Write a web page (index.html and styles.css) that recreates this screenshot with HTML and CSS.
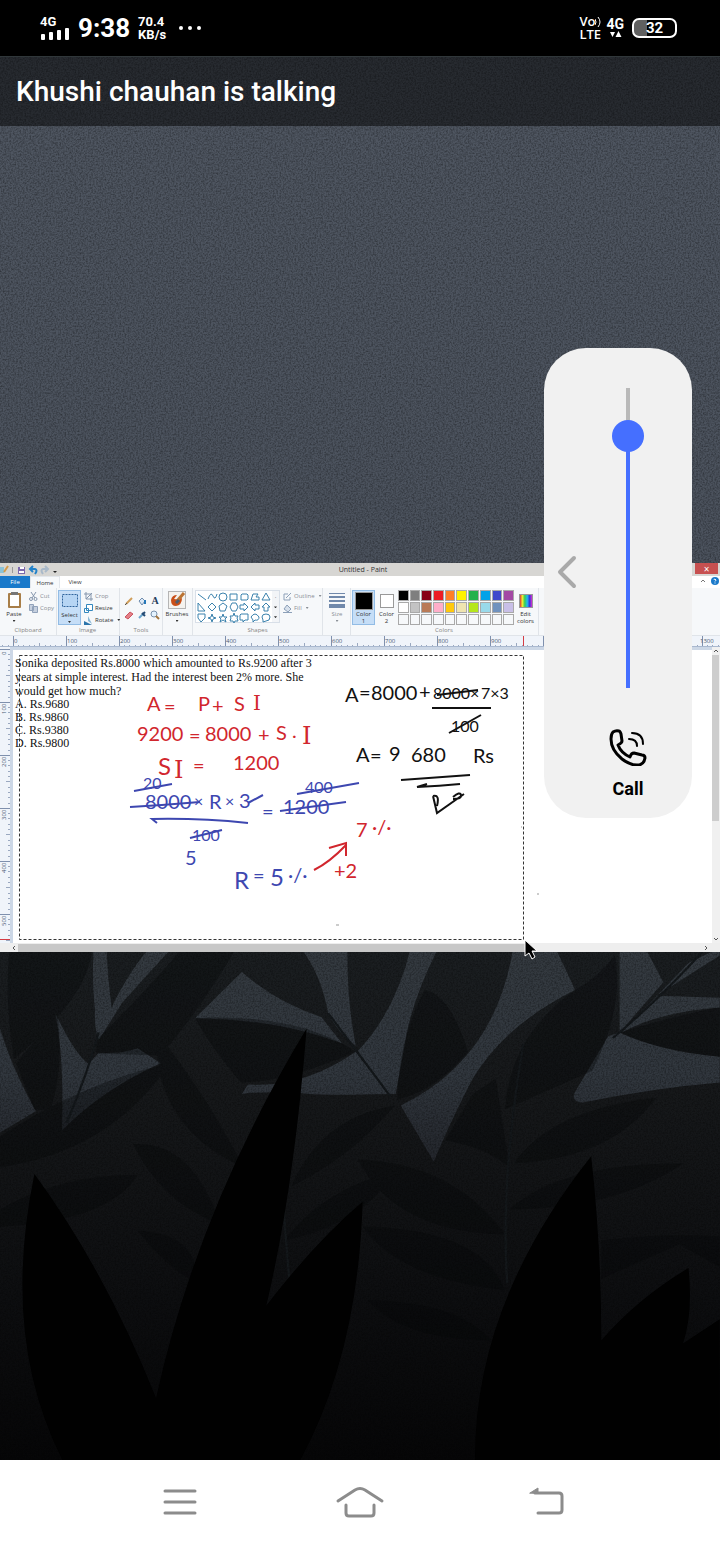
FILE: index.html
```html
<!DOCTYPE html>
<html lang="en">
<head>
<meta charset="utf-8">
<meta name="viewport" content="width=device-width, initial-scale=1">
<title>Meeting</title>
<link rel="stylesheet" href="styles.css">
</head>
<body>
<header class="status">
  <div class="status-left">
    <div class="signal"><span>4G</span>
      <svg width="30" height="14" viewBox="0 0 30 14"><g fill="#fff"><rect x="1" y="7" width="4" height="6" rx="1"/><rect x="9" y="5" width="4" height="8" rx="1"/><rect x="17" y="3" width="4" height="10" rx="1"/><rect x="25" y="1" width="4" height="12" rx="1"/></g></svg>
    </div>
    <time class="clock">9:38</time>
    <div class="speed"><span>70.4</span><span>KB/s</span></div>
    <svg width="24" height="6" viewBox="0 0 24 6" fill="#fff"><circle cx="3" cy="3" r="2"/><circle cx="12" cy="3" r="2"/><circle cx="21" cy="3" r="2"/></svg>
  </div>
  <div class="status-right">
    <div class="volte"><span>Vo<svg width="6" height="10" viewBox="0 0 6 10" fill="none" stroke="#fff"><path d="M0 2q2 3 0 6M3 0q4 5 0 10"/></svg></span><span>LTE</span></div>
    <div class="data"><span>4G</span><svg width="13" height="7" viewBox="0 0 13 7" fill="#fff"><path d="M1 1h5L3.500 6zM6.500 6h6L9.500 0z"/></svg></div>
    <div class="battery"><span>32</span></div>
  </div>
</header>

<main class="stage">
  <svg class="backdrop" viewBox="0 0 720 1404" preserveAspectRatio="xMidYMid slice" aria-hidden="true">
    <defs>
      <linearGradient id="sky" x1="0" y1="0" x2="0" y2="1"><stop offset="0" stop-color="#4f5661"/><stop offset=".36" stop-color="#4b525d"/><stop offset=".62" stop-color="#3b4149"/><stop offset="1" stop-color="#202329"/></linearGradient>
      <linearGradient id="floor" x1="0" y1="0" x2="0" y2="1"><stop offset="0" stop-color="#1c2023"/><stop offset=".3" stop-color="#17191b"/><stop offset=".7" stop-color="#0d0e10"/><stop offset="1" stop-color="#060607"/></linearGradient>
      <linearGradient id="gap" gradientUnits="userSpaceOnUse" x1="0" y1="30" x2="0" y2="560"><stop offset="0" stop-color="#343a40"/><stop offset=".6" stop-color="#31373e"/><stop offset="1" stop-color="#24272d"/></linearGradient>
      <filter id="grain" x="0" y="0" width="100%" height="100%"><feTurbulence type="fractalNoise" baseFrequency=".6" numOctaves="2" seed="4"/><feColorMatrix values="0 0 0 0 0  0 0 0 0 0  0 0 0 0 0  .700 0 0 0 -.25"/></filter>
    </defs>
    <rect width="720" height="1404" fill="url(#sky)"/>
    <rect y="860" width="720" height="544" fill="url(#floor)"/>
    <g transform="translate(0 884) scale(.459 .385)">
      <g fill="url(#gap)">
        <path d="M204 20H232Q235 110 245 190L215 260Q205 230 207 180Q200 110 204 20Z"/>
        <path d="M325 20H375Q320 90 265 165L215 260Q250 130 325 20Z"/>
        <path d="M527 83L425 203Q600 205 745 268L700 200Q600 160 527 83Z"/>
        <path d="M655 20H757Q755 150 775 275Q735 240 715 190Q700 90 655 20Z"/>
        <path d="M895 20H955Q900 150 885 250L862 400H845L778 290Q860 190 895 20Z"/>
        <path d="M527 400L540 375Q660 385 775 290L845 400Q690 405 650 397Q560 393 527 400Z"/>
        <path d="M1118 20H1210L1253 130Q1100 220 1030 360Q990 450 945 575L873 430Q1080 310 1118 20Z"/>
        <path d="M120 190Q165 300 193 322L215 293Q260 297 300 281L350 320Q220 390 135 495Q140 300 120 190Z"/>
        <path d="M1350 30H1410L1445 110L1350 240Z"/>
        <path d="M1500 60L1568 20V40L1430 145L1568 150V175Q1440 185 1355 240Z"/>
        <path d="M1325 250L1350 240Q1440 290 1568 303V370Q1420 385 1270 422Q1240 420 1255 390Z"/>
        <path d="M0 230Q25 330 78 445L0 500Z"/>
      </g>
      <g fill="#050708" opacity=".34">
        <path d="M20 30H200Q190 150 30 310Q10 160 20 30ZM35 320Q90 240 125 190Q140 340 110 440L75 440ZM210 260Q320 130 390 31H510Q430 190 350 300L210 295Z"/>
        <path d="M425 203Q650 190 775 290Q620 370 525 370Q460 280 425 203ZM925 130Q980 140 1020 290Q950 390 865 415Q870 250 925 130Z"/>
        <path d="M1350 240Q1490 190 1568 175V303Q1430 285 1350 240ZM1253 130Q1300 100 1340 40Q1360 180 1290 340L1100 440Q1110 250 1253 130Z"/>
        <path d="M0 510Q180 370 370 320Q240 550 0 590ZM0 700Q130 610 300 610Q240 730 0 745ZM335 230Q450 400 530 590Q390 520 350 360ZM290 530Q420 520 480 740Q350 680 290 530Z"/>
        <path d="M635 640Q700 460 860 430Q770 560 635 640ZM780 570Q990 580 1100 765Q860 760 780 570ZM620 780Q700 650 860 600Q790 740 620 780ZM790 745Q1050 750 1100 910Q870 880 790 745Z"/>
        <path d="M1120 580Q1200 440 1430 410Q1330 570 1120 580ZM1110 700Q1220 580 1490 580Q1340 700 1110 700ZM1310 780Q1450 760 1568 770V850L1480 790L1310 880ZM300 755Q430 760 430 890Q370 860 300 755ZM800 935Q1000 940 1070 1040Q880 1040 800 935ZM970 520Q1060 540 1110 590L1080 360L1030 400Z"/>
      </g>
      <path d="M215 240Q190 350 145 475M715 190Q790 310 850 405M1530 31Q1440 150 1335 255M1140 270Q1090 620 1105 890M615 660L630 880" fill="none" stroke="#14181b" stroke-width="5"/>
      <path fill="#010101" d="M75 608Q230 860 340 1190Q430 700 668 230Q640 650 580 950Q690 780 790 680Q780 1080 650 1360H140Q0 1040 75 608ZM1288 562Q1310 800 1310 1040Q1390 930 1500 852Q1510 970 1488 1048L1568 985V1360H1035Q1030 950 1288 562Z"/>
    </g>
    <rect width="720" height="1404" filter="url(#grain)"/>
  </svg>

  <h1 class="talking">Khushi chauhan is talking</h1>

  <section class="paint" aria-label="Shared screen">
    <div class="win-title">
      <div class="quick">
        <svg width="60" height="12" viewBox="0 0 60 12"><path d="M0 3h4v6H0z" fill="#8cc3d8"/><path d="M4 8l4-6" stroke="#d39b4b" stroke-width="2"/><path d="M12.500 3v6" stroke="#999"/><path d="M18 3h7v7h-7z" fill="#7b68ad"/><path d="M20 3h4v2h-4zM19 7h5v2h-5z" fill="#fff"/><path d="M31 5h4q3 1 0 5M33 2l-3 3 3 3" fill="none" stroke="#2382c9" stroke-width="2"/><path d="M47 5h-4q-3 1 0 5M45 2l3 3-3 3" fill="none" stroke="#a9b9c9" stroke-width="2"/><path d="M53 7h4l-2 2z" fill="#222"/></svg>
      </div>
      <span class="win-name">Untitled - Paint</span>
      <div class="win-end"><button class="close" aria-label="Close">×</button></div>
    </div>
    <nav class="tabs">
      <button class="tab file">File</button><button class="tab home">Home</button><button class="tab">View</button>
      <svg class="help" width="22" height="10" viewBox="0 0 22 10"><path d="M3 6l2-2 2 2" fill="none" stroke="#777"/><circle cx="17" cy="5" r="4" fill="#1979ca"/><path d="M16 4q0-1 1-1 2 1 0 2.500M17 6.500v1" fill="none" stroke="#fff"/></svg>
    </nav>
    <div class="ribbon">
      <div class="group clipboard">
        <div class="tools-row">
          <button class="big"><svg width="15" height="18" viewBox="0 0 15 18"><rect x="1" y="2" width="13" height="15" rx="1" fill="#a87e48"/><path d="M3 4h9v11H3z" fill="#fff"/><path d="M4 1h7v3H4z" fill="#777"/></svg>Paste<i class="caret"></i></button>
          <div class="stack dim">
            <button><svg width="9" height="9" viewBox="0 0 9 9" fill="none" stroke="#8596ad"><path d="M2 0l4 6M7 0L3 6"/><circle cx="2" cy="7" r="1.500"/><circle cx="6.500" cy="7" r="1.500"/></svg>Cut</button>
            <button><svg width="9" height="9" viewBox="0 0 9 9" fill="#c6d0df" stroke="#91a2ba"><path d="M.5.5h4v6h-4zM3.500 2.500h5v6h-5z"/></svg>Copy</button>
          </div>
        </div>
        <h2>Clipboard</h2>
      </div>
      <div class="group image">
        <div class="tools-row">
          <button class="big selected"><svg width="18" height="19" viewBox="0 0 18 19"><rect x="1.500" y="3.500" width="15" height="12" fill="#b6d5f4" stroke="#31659d" stroke-dasharray="2 1"/></svg>Select<i class="caret"></i></button>
          <div class="stack">
            <button class="dim"><svg width="9" height="9" viewBox="0 0 9 9" fill="none" stroke="#8596ad"><path d="M2 0v7h7M0 2h7v7M2 7l6-6"/></svg>Crop</button>
            <button><svg width="9" height="9" viewBox="0 0 9 9" fill="#fff" stroke="#3387bd"><path d="M2.500.5h6v6h-6zM.5 4.500h4v4h-4z"/></svg>Resize</button>
            <button><svg width="9" height="9" viewBox="0 0 9 9"><path d="M0 5v4h8z" fill="#2c75ab"/><path d="M4 0v5l4 3z" fill="#89b8d8"/></svg>Rotate<i class="caret"></i></button>
          </div>
        </div>
        <h2>Image</h2>
      </div>
      <div class="group tools">
        <div class="tool-grid">
          <svg viewBox="0 0 10 10"><path d="M2 8l6-6" stroke="#cf9d59" stroke-width="2"/><path d="M1 9l2-2" stroke="#555"/></svg>
          <svg viewBox="0 0 10 10"><path d="M2 5l3-3 3 3-3 4z" fill="#dce8f4" stroke="#6f8daf"/><path d="M8 4v4" stroke="#2678b9" stroke-width="2"/></svg>
          <span>A</span>
          <svg viewBox="0 0 10 10"><path d="M1 7l5-5 3 2-5 5z" fill="#e57f87" stroke="#c85560"/></svg>
          <svg viewBox="0 0 10 10"><path d="M2 8l4-4" stroke="#6aa5cc" stroke-width="2"/><path d="M5 3l3 3M6 4l2-2" stroke="#234a73" stroke-width="2"/></svg>
          <svg viewBox="0 0 10 10"><circle cx="4" cy="4" r="3" fill="#e4f3ff" stroke="#7992ad"/><path d="M6 6l3 3" stroke="#a3763f" stroke-width="2"/></svg>
        </div>
        <h2>Tools</h2>
      </div>
      <div class="group brushes">
        <button class="big"><svg width="18" height="18" viewBox="0 0 18 18"><rect x=".5" y=".5" width="17" height="17" fill="#f5f3ef" stroke="#b5b5b5"/><path d="M3 9q1-5 6-5l-3 4q5 1 8-1 0 7-6 8-5 0-5-6z" fill="#c94f18"/><path d="M9 10l7-8" stroke="#bb7434" stroke-width="3"/><path d="M8 12l3-3" stroke="#4e5e70" stroke-width="3"/></svg>Brushes<i class="caret"></i></button>
      </div>
      <div class="group shapes">
        <div class="tools-row">
          <div class="shape-box">
            <svg width="76" height="33" viewBox="0 0 76 33" fill="none" stroke="#3b82ad"><path d="M2 3l8 6M12 8q3-8 5-3t4-2"/><circle cx="27" cy="6" r="4"/><path d="M34 3h7v6h-7zM46 3h5l1 1v4l-1 1h-6V4zM55 9l2-6h5l-2 3h3v3zM66 9l4-7 4 7z"/><path d="M2 12v8h7zM16 12l4 4-4 4-4-4zM27 12l4 3-2 5h-5l-1-5zM36 12h4l2 4-2 4h-4l-2-4zM44 14h4v-2l4 4-4 4v-2h-4zM63 14h-4v-2l-4 4 4 4v-2h4zM68 20v-4h-2l4-4 4 4h-2v4z"/><path d="M2 23h7v4l-4 4-3-4zM16 23l1 3 3 1-3 1-1 3-1-3-3-1 3-1zM27 23l1 3h3l-2 2 1 3-3-2-3 2 1-3-2-2h3zM38 22l1 3h3l-1 2 1 3h-3l-1 2-1-2h-3l1-3-1-2h3zM45 23h7v6h-3l-2 2v-2h-3v-5zM55 26q4-6 8 0 0 4-4 3l-2 2v-2zM66 26q0-3 4-3t4 3q0 4-4 4l-3 1v-2z"/></svg>
            <div class="shape-scroll"><i>·</i><i class="caret"></i><i class="caret"></i></div>
          </div>
          <div class="stack dim">
            <button><svg width="9" height="9" viewBox="0 0 9 9" fill="none" stroke="#8da0b8"><path d="M7 5v3H1V2h4M3 6l5-5"/></svg>Outline<i class="caret"></i></button>
            <button><svg width="9" height="9" viewBox="0 0 9 9" fill="#d8e1ec" stroke="#8da0b8"><path d="M1 5l3-4 4 4-3 3zM0 8.500h9"/></svg>Fill<i class="caret"></i></button>
          </div>
        </div>
        <h2>Shapes</h2>
      </div>
      <div class="group size">
        <button class="big dim"><svg width="18" height="18" viewBox="0 0 18 18" fill="#7189ab"><path d="M1 2h16v1H1zM1 5h16v2H1zM1 9h16v2H1zM1 13h16v4H1z"/></svg>Size<i class="caret"></i></button>
      </div>
      <div class="group colors">
        <div class="tools-row">
          <button class="big selected"><b class="well black"></b><span>Color<br>1</span></button>
          <button class="big"><b class="well"></b><span>Color<br>2</span></button>
          <div class="palette">
            <i class="c1"></i><i class="c2"></i><i class="c3"></i><i class="c4"></i><i class="c5"></i><i class="c6"></i><i class="c7"></i><i class="c8"></i><i class="c9"></i><i class="c10"></i>
            <i class="c11"></i><i class="c12"></i><i class="c13"></i><i class="c14"></i><i class="c15"></i><i class="c16"></i><i class="c17"></i><i class="c18"></i><i class="c19"></i><i class="c20"></i>
            <i></i><i></i><i></i><i></i><i></i><i></i><i></i><i></i><i></i><i></i>
          </div>
          <button class="big edit"><b class="well rainbow"></b><span>Edit<br>colors</span></button>
        </div>
        <h2>Colors</h2>
      </div>
    </div>
    <svg class="ruler" height="11" aria-hidden="true">
      <defs><pattern id="ticks" x="13" width="53" height="11" patternUnits="userSpaceOnUse"><path d="M.5 0v11" stroke="#7f90ad"/><path d="M5.500 9v2M10.500 9v2M16.500 9v2M21.500 9v2M26.500 7v4M32.500 9v2M37.500 9v2M42.500 9v2M48.500 9v2" stroke="#9aa8c0"/></pattern></defs>
      <rect width="100%" height="11" fill="url(#ticks)"/>
      <g><text x="14" y="7">0</text><text x="67" y="7">100</text><text x="120" y="7">200</text><text x="173" y="7">300</text><text x="226" y="7">400</text><text x="279" y="7">500</text><text x="332" y="7">600</text><text x="385" y="7">700</text><text x="438" y="7">800</text><text x="491" y="7">900</text><text x="544" y="7">1000</text><text x="700" y="7">1300</text></g>
      <path d="M523.500 0v11" stroke="#d33c45"/>
    </svg>
    <div class="workspace">
      <svg class="side-ruler" width="10" height="296" viewBox="0 0 10 296" aria-hidden="true">
        <defs><pattern id="vticks" y="2" width="10" height="53" patternUnits="userSpaceOnUse"><path d="M0 .5h10" stroke="#7f90ad"/><path d="M8 5.500h2M8 10.500h2M8 16.500h2M8 21.500h2M6 26.500h4M8 32.500h2M8 37.500h2M8 42.500h2M8 48.500h2" stroke="#9aa8c0"/></pattern></defs>
        <rect width="10" height="296" fill="url(#vticks)"/>
        <g><text transform="translate(6 8) rotate(-90)">0</text><text transform="translate(6 67) rotate(-90)">100</text><text transform="translate(6 120) rotate(-90)">200</text><text transform="translate(6 173) rotate(-90)">300</text><text transform="translate(6 226) rotate(-90)">400</text><text transform="translate(6 279) rotate(-90)">500</text></g>
        <path d="M0 292.500h10" stroke="#d33c45"/>
      </svg>
      <div class="canvas">
        <p class="question">Sonika deposited Rs.8000 which amounted to Rs.9200 after 3<br>years at simple interest. Had the interest been 2% more. She<br>would get how much?</p>
        <ul class="options"><li>A. Rs.9680</li><li>B. Rs.9860</li><li>C. Rs.9380</li><li>D. Rs.9800</li></ul>
        <svg class="ink" width="702" height="305" viewBox="10 647 702 305">
          <rect x="19.500" y="655.500" width="504" height="284" fill="none" stroke="#333" stroke-dasharray="3 2"/>
          <g class="red">
            <text x="147" y="711">A</text><text x="164" y="714">=</text><text x="198" y="711">P</text><text x="212" y="713">+</text><text x="234" y="711">S</text><text class="serif" x="253" y="710">I</text>
            <text x="137" y="741">9200</text><text x="189" y="743">=</text><text x="205" y="741">8000</text><text x="258" y="742">+</text><text x="276" y="740">S</text><text x="292" y="738">.</text><text class="serif large" x="302" y="744">I</text>
            <text class="large" x="158" y="775">S</text><text class="serif large" x="174" y="778">I</text><text x="193" y="773">=</text><text x="233" y="770">1200</text>
            <text x="356" y="837">7</text><text x="372" y="834">·/·</text><text x="334" y="878">+2</text>
            <path d="M314 870Q330 862 346 845M329 848L346 843V856"/>
          </g>
          <g class="blue">
            <text class="small" x="143" y="789">20</text><text x="145" y="809">8000</text><text class="small" x="194" y="807">×</text><text x="209" y="809">R</text><text class="small" x="225" y="807">×</text><text x="239" y="808">3</text>
            <text x="262" y="819">=</text><text x="283" y="814">1200</text><text class="small" x="305" y="793">400</text>
            <text class="small" x="192" y="841">100</text><text x="185" y="865">5</text>
            <text class="large" x="234" y="889">R</text><text x="253" y="883">=</text><text class="large" x="270" y="886">5</text><text x="288" y="882">·/·</text>
            <path d="M134 791L172 784M130 807Q165 805 200 802M248 803L263 795M157 823L152 819Q200 818 248 823M297 794L359 783M280 811L346 802M190 838L222 830"/>
          </g>
          <g class="black">
            <text x="345" y="702">A</text><text x="359" y="700">=</text><text x="371" y="700">8000</text><text x="419" y="699">+</text>
            <text class="small" x="433" y="699">8000×</text><text class="small" x="481" y="699">7×3</text><text class="small" x="451" y="732">100</text>
            <text x="356" y="762">A</text><text x="370" y="763">=</text><text x="389" y="761">9</text><text x="411" y="762">680</text><text x="473" y="763">Rs</text>
            <path d="M437 695L478 690M432 708L491 708M449 733L481 715M401 780L470 775M417 787Q440 786 460 784M417 787L427 784M433 796L437 813 464 794M433 796q7-2 4 10M453 797q7-6 8-2t-8 4"/>
          </g>
          <path d="M525 940V956L529 953 532 959 535 957 532 951H537Z" fill="#000" stroke="#fff"/>
          <path d="M336 925h3M537 894h2M521 827h1" stroke="#999"/>
        </svg>
      </div>
      <div class="vbar"><svg width="8" height="8" viewBox="0 0 8 8"><path d="M2 5l2-2 2 2" fill="none" stroke="#555"/></svg><i></i><svg width="8" height="8" viewBox="0 0 8 8"><path d="M2 3l2 2 2-2" fill="none" stroke="#555"/></svg></div>
    </div>
    <div class="hbar"><svg width="8" height="8" viewBox="0 0 8 8"><path d="M5 2L3 4l2 2" fill="none" stroke="#555"/></svg><i></i><svg width="8" height="8" viewBox="0 0 8 8"><path d="M3 2l2 2-2 2" fill="none" stroke="#555"/></svg></div>
  </section>

  <aside class="volume">
    <button class="expand" aria-label="More volume settings"><svg width="20" height="34" viewBox="0 0 20 34"><path d="M17 3L3 17l14 14" fill="none" stroke="#a9a9a9" stroke-width="4" stroke-linecap="round" stroke-linejoin="round"/></svg></button>
    <div class="level">
      <input id="call-volume" class="slider" type="range" min="0" max="100" value="88">
      <svg class="phone" width="38" height="38" viewBox="0 0 38 38" fill="none" stroke="#000" stroke-linecap="round" stroke-linejoin="round"><path stroke-width="3" d="M4 4Q7 2 10 3Q11 3 12 6L13 13Q13 15 9 17Q12 25 21 29Q22 25 25 25L33 27Q36 27 36 30Q35 36 30 37Q22 38 13 31Q2 22 2 11Q2 6 4 4Z"/><path stroke-width="2" d="M20 11Q28 11 28 18M23 5Q34 5 34 16"/></svg>
      <label for="call-volume">Call</label>
    </div>
  </aside>
</main>

<footer class="navbar">
  <button aria-label="Recent apps"><svg width="40" height="32" viewBox="-5 0 40 32"><path d="M5 5h30M5 16h30M5 27h30"/></svg></button>
  <button aria-label="Home"><svg width="48" height="32" viewBox="0 0 48 32"><path d="M2 15L19 4q5-3 10 0l17 11M10 19v8q0 3 3 3h22q3 0 3-3v-8"/></svg></button>
  <button aria-label="Back"><svg width="40" height="32" viewBox="-4 0 40 32"><path d="M6 7h24q3 0 3 3v14q0 3-3 3H9"/><path class="arrow" d="M1 7l8-5v5z"/></svg></button>
</footer>
</body>
</html>
```

FILE: styles.css
```css
* { box-sizing: border-box; }
body { margin: 0; min-height: 100vh; display: flex; flex-direction: column; font-family: Roboto, sans-serif; background: #000; }
button { border: 0; padding: 0; margin: 0; background: none; font: inherit; color: inherit; }
svg { display: block; flex: none; }

.status { height: 56px; display: flex; justify-content: space-between; align-items: center; padding: 0 43px 0 40px; background: #000; color: #fff; font-weight: 700; }
.status-left, .status-right { display: flex; align-items: center; }
.status-left { gap: 8px; }
.status-right { gap: 5px; }
.signal, .speed, .volte, .data { display: flex; flex-direction: column; font-size: 13px; line-height: 13px; }
.signal { line-height: 11px; }
.clock { font-size: 26px; line-height: 30px; }
.speed { margin-right: 4px; }
.volte { font-family: "Open Sans", sans-serif; font-weight: 600; }
.volte span { display: flex; align-items: center; }
.data { align-items: center; font-size: 14px; }
.battery { width: 45px; height: 20px; margin-left: 3px; border: 2px solid #fff; border-radius: 7px; background: linear-gradient(90deg, #606060 13px, #000 13px); text-align: center; font-size: 15px; line-height: 16px; }

.stage { position: relative; flex: 1; display: flex; flex-direction: column; justify-content: center; overflow: hidden; padding: 70px 0 71px; }
.backdrop { position: absolute; inset: 0; width: 100%; height: 100%; }
.talking { position: absolute; top: 0; left: 0; right: 0; margin: 0; padding: 0 16px; font-size: 28px; font-weight: 500; line-height: 69px; color: #fff; background: rgba(0, 0, 0, .5); border-top: 1px solid #30373a; }

.paint { position: relative; background: #fff; font-family: "Open Sans", sans-serif; font-size: 6px; line-height: 8px; color: #333; }
.win-title { display: grid; grid-template-columns: 1fr auto 1fr; align-items: center; height: 13px; background: #d7d6d3; }
.win-name { font-size: 7px; line-height: 12px; padding-left: 6px; }
.win-end { display: flex; justify-content: flex-end; align-self: start; padding-right: 2px; }
.close { width: 23px; height: 11px; background: #c75050; color: #fff; font-size: 10px; line-height: 10px; }
.tabs { display: flex; align-items: stretch; height: 12px; }
.tab { width: 30px; }
.file { background: #1979ca; color: #fff; }
.home { background: #f7f9fb; border: 1px solid #e3e7ec; border-bottom: 0; }
.help { margin-left: auto; }
.ribbon { display: flex; height: 48px; background: #f6f8fa; border-bottom: 1px solid #e0e4e9; }
.group { display: flex; flex-direction: column; flex: none; padding: 2px 2px 0; border-right: 1px solid #e0e4e9; }
.group h2 { margin: auto 0 0; font-size: 6px; font-weight: 400; line-height: 9px; text-align: center; color: #858585; }
.clipboard { width: 57px; }
.image { width: 63px; padding-left: 1px; }
.tools { width: 43px; }
.brushes { width: 30px; }
.shapes { width: 130px; }
.size { width: 28px; }
.colors { width: 188px; padding-left: 1px; }
.tools-row { display: flex; gap: 3px; }
.big { display: flex; flex-direction: column; align-items: center; flex: none; width: 23px; height: 35px; padding-top: 1px; line-height: 7px; text-align: center; }
.big svg { margin-bottom: 2px; }
.clipboard .big, .brushes .big, .size .big { width: 24px; }
.selected { background: #c6def7; outline: 1px solid #92bce5; outline-offset: -1px; }
.stack { display: flex; flex-direction: column; gap: 2px; padding-top: 1px; }
.stack button { display: flex; align-items: center; gap: 2px; height: 10px; }
.dim { color: #8a8f96; }
.caret { width: 3px; height: 2px; margin: 2px; background: currentColor; clip-path: polygon(0 0, 100% 0, 50% 100%); }
.tool-grid { display: grid; grid-template-columns: repeat(3, 10px); gap: 4px 3px; padding: 6px 0 0 2px; font: 700 10px/10px "Liberation Serif", serif; color: #243c5c; text-align: center; }
.shape-box { display: flex; height: 33px; background: #fff; border: 1px solid #d8dfe8; }
.shape-scroll { display: flex; flex-direction: column; justify-content: space-around; align-items: center; width: 7px; background: #f2f4f7; }
.well { width: 14px; height: 14px; margin: 3px 0; border: 1px solid #999; background: #fff; flex: none; }
.black { width: 18px; height: 18px; margin: 1px 0; background: #000; }
.colors .tools-row { gap: 0; }
.rainbow { background: linear-gradient(90deg, #d33, #ee3, #3c5, #2be, #33d, #d3c); }
.palette { display: grid; grid-template-columns: repeat(10, 1fr); gap: 1px; width: 116px; height: 35px; flex: none; }
.palette i { border: 1px solid #a9a9a9; }
.c1 { background: #000; } .c2 { background: #7f7f7f; } .c3 { background: #880015; } .c4 { background: #ed1c24; } .c5 { background: #ff7f27; }
.c6 { background: #fff200; } .c7 { background: #22b14c; } .c8 { background: #00a2e8; } .c9 { background: #3f48cc; } .c10 { background: #a349a4; }
.c11 { background: #fff; } .c12 { background: #c3c3c3; } .c13 { background: #b97a57; } .c14 { background: #ffaec9; } .c15 { background: #ffc90e; }
.c16 { background: #efe4b0; } .c17 { background: #b5e61d; } .c18 { background: #99d9ea; } .c19 { background: #7092be; } .c20 { background: #c8bfe7; }
.ruler { width: 100%; background: #f0f4fa; border-bottom: 1px solid #a9b8cf; }
.ruler text, .side-ruler text { font: 6px "Open Sans", sans-serif; fill: #4c5a72; }
.workspace { display: flex; height: 296px; }
.side-ruler { background: #f0f4fa; }
.canvas { position: relative; flex: 1; min-width: 0; padding: 6px 0 0 2px; border: solid #ccd7e6; border-width: 3px 0 0 3px; font-family: "Liberation Serif", serif; font-size: 12px; line-height: 14px; color: #111; white-space: nowrap; }
.question { margin: 0; }
.options { margin: 0; padding: 0; list-style: none; line-height: 13px; }
.ink { position: absolute; left: -3px; top: -3px; z-index: 1; overflow: visible; }
.ink text { font: 20px Lato, sans-serif; stroke: none; }
.ink .small { font-size: 16px; }
.ink .large { font-size: 24px; }
.ink .serif { font-family: "DejaVu Serif", serif; }
.ink .red, .ink .blue, .ink .black { width: auto; height: auto; background: none; fill: none; stroke-width: 2; }
.ink .red { stroke: #d1262d; }
.ink .red text { fill: #d1262d; }
.ink .blue { stroke: #3d47b0; }
.ink .blue text { fill: #3d47b0; }
.ink .black { stroke: #111; }
.ink .black text { fill: #111; }
.vbar { display: flex; flex-direction: column; width: 8px; background: #f0f0f0; }
.vbar i { width: 7px; height: 166px; background: #cdcdcd; margin-bottom: auto; }
.hbar { display: flex; align-items: center; height: 9px; padding: 0 10px; background: #eee; }
.hbar i { width: 73%; height: 8px; margin-right: auto; background: #c8c8c8; }

.volume { position: absolute; z-index: 2; top: 292px; right: 28px; width: 148px; display: grid; grid-template-columns: 40px 88px; align-items: start; padding: 40px 0 18px; border-radius: 42px; background: #f1f1f1; }
.expand { justify-self: end; margin: 167px 7px 0 0; }
.level { display: flex; flex-direction: column; align-items: center; }
.slider { appearance: none; writing-mode: vertical-lr; direction: rtl; width: 32px; height: 300px; margin: 0; background: none; }
.slider::-webkit-slider-runnable-track { width: 32px; height: 300px; background: linear-gradient(#b9b9b9 49px, #456fff 49px) center / 4px 100% no-repeat; }
.slider::-webkit-slider-thumb { appearance: none; width: 32px; height: 32px; border-radius: 50%; background: #456fff; }
.phone { margin: 40px 0 12px; }
.level label { font-size: 18px; font-weight: 700; line-height: 22px; color: #000; }

.navbar { display: grid; grid-template-columns: repeat(3, 1fr); height: 84px; padding: 0 82px; background: #fff; }
.navbar button { display: grid; place-items: center; }
.navbar svg { overflow: visible; }
.navbar path { fill: none; stroke: #8c8c8c; stroke-width: 3; stroke-linecap: round; }
.navbar .arrow { fill: #8c8c8c; stroke-width: 1; }
```
